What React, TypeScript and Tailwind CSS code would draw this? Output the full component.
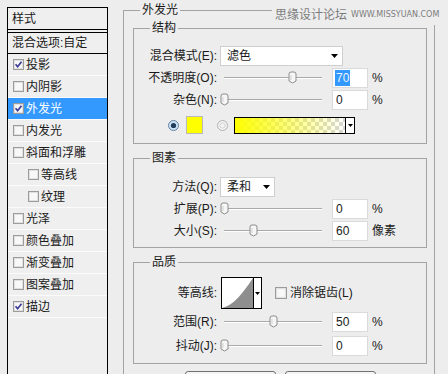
import React from 'react';

const LAYERS = [
  { t: '投影', on: true },
  { t: '内阴影' },
  { t: '外发光', on: true, active: true },
  { t: '内发光' },
  { t: '斜面和浮雕' },
  { t: '等高线', sub: true },
  { t: '纹理', sub: true },
  { t: '光泽' },
  { t: '颜色叠加' },
  { t: '渐变叠加' },
  { t: '图案叠加' },
  { t: '描边', on: true },
];

const Check = ({ on, size = 11 }: { on?: boolean; size?: number }) => (
  <svg width={size} height={size} viewBox="0 0 11 11" className="shrink-0">
    <rect x="0.5" y="0.5" width="10" height="10" fill="#f8f8f8" stroke="#9c9c9c" />
    <rect x="1.5" y="1.5" width="8" height="8" fill="none" stroke="#e0e0e0" />
    {on && <path d="M2.6 5.3 L4.6 7.7 L8.5 2.7" fill="none" stroke="#3a3a96" strokeWidth="1.7" />}
  </svg>
);

const Arrow = () => (
  <svg width="7" height="4" viewBox="0 0 7 4" className="shrink-0">
    <path d="M0 0 H7 L3.5 4 Z" fill="#000" />
  </svg>
);

const Slider = ({ pct }: { pct: number }) => (
  <div className="relative ml-[3px] flex h-full w-[106px] items-center px-[4px]">
    <div className="h-[2px] w-full border-y border-t-[#a9a9a9] border-b-white" />
    <svg
      width="9"
      height="13"
      viewBox="0 0 9 13"
      className="absolute top-[4px]"
      style={{ left: 4 + (98 * pct) / 100 - 4.5 }}
    >
      <path d="M1 3 Q1 1 3 1 H6 Q8 1 8 3 V10 L4.5 12 L1 10 Z" fill="#f6f6f6" stroke="#8c8c8c" />
      <path d="M3 4 V9" stroke="#cfcfcf" />
    </svg>
  </div>
);

const Num = ({ v, sel }: { v: string; sel?: boolean }) => (
  <div className="ml-[6px] flex h-[20px] w-[36px] items-center border border-[#dadada] bg-white pl-[2px]">
    <span className={sel ? 'bg-[#3399ff] px-[1px] text-[#eaf4ff]' : 'px-[1px]'}>{v}</span>
  </div>
);

const Row = ({ label, children }: { label: string; children: React.ReactNode }) => (
  <div className="flex h-[22px] items-center">
    <div className="w-[83px] text-right">{label}</div>
    {children}
  </div>
);

const Group = ({ title, className, children }: { title: string; className: string; children: React.ReactNode }) => (
  <fieldset className={`ml-[9px] w-[294px] border border-[#a3a3a3] ${className}`}>
    <legend className="ml-[16px] px-[2px] leading-[16px]">{title}</legend>
    {children}
  </fieldset>
);

export default function App() {
  return (
    <div className="relative flex h-[374px] w-[448px] items-start overflow-hidden bg-[#ededed] font-['Liberation_Sans','Noto_Sans_CJK_SC',sans-serif] text-[12px] leading-[16px] text-[#1a1a1a]">
      {/* style list */}
      <div className="ml-[7px] mt-[7px] h-[380px] w-[101px] shrink-0 border-x border-t border-black bg-[#efefef]">
        <div className="flex h-[22px] items-center border-b border-black pl-[4px]">样式</div>
        <div className="h-[2px]" />
        <div className="flex h-[22px] items-center border-y border-black pl-[4px]">混合选项:自定</div>
        {LAYERS.map((l) => (
          <div
            key={l.t}
            className={`flex h-[22px] items-center border-b border-[#fbfbfb] ${l.sub ? 'pl-[20px]' : 'pl-[5px]'} ${
              l.active ? 'bg-[#3399ff] text-white' : ''
            }`}
          >
            <Check on={l.on} />
            <span className="ml-[2px]">{l.t}</span>
          </div>
        ))}
      </div>

      {/* outer glow panel */}
      <fieldset className="ml-[15px] mt-[2px] h-[420px] w-[312px] shrink-0 border border-[#a3a3a3]">
        <legend className="ml-[16px] px-[2px] leading-[16px]">外发光</legend>

        <Group title="结构" className="mt-[2px] pb-[7px] pt-[9px]">
          <Row label="混合模式(E):">
            <div className="ml-[3px] flex h-[20px] w-[123px] items-center justify-between border border-[#cfcfcf] bg-white pl-[6px] pr-[4px]">
              <span>滤色</span>
              <Arrow />
            </div>
          </Row>
          <Row label="不透明度(O):">
            <Slider pct={70} />
            <Num v="70" sel />
            <span className="ml-[4px]">%</span>
          </Row>
          <Row label="杂色(N):">
            <Slider pct={0} />
            <Num v="0" />
            <span className="ml-[4px]">%</span>
          </Row>
          <div className="mt-[3px] flex h-[22px] items-center pl-[34px]">
            <svg width="11" height="11" viewBox="0 0 11 11" className="shrink-0">
              <circle cx="5.5" cy="5.5" r="5" fill="#cfe0f0" stroke="#5f84aa" />
              <circle cx="5.5" cy="5.5" r="2.6" fill="#1f3c5c" />
            </svg>
            <div className="ml-[7px] h-[18px] w-[17px] border border-[#b9b9b9] bg-[#ffff00]" />
            <svg width="11" height="11" viewBox="0 0 11 11" className="ml-[14px] shrink-0">
              <circle cx="5.5" cy="5.5" r="5" fill="#f3f3f3" stroke="#b0b0b0" />
              <circle cx="5.5" cy="5.5" r="2.6" fill="none" stroke="#d4d4d4" />
            </svg>
            <div className="ml-[6px] flex h-[17px] w-[121px] border border-black">
              <div className="flex-1 bg-[repeating-conic-gradient(#d6d6d6_0_25%,#ffffff_0_50%)] bg-[length:8px_8px]">
                <div className="h-full w-full bg-[linear-gradient(to_right,#ffff00,rgba(255,255,0,0.55)_45%,rgba(255,255,0,0))]" />
              </div>
              <div className="flex w-[9px] items-center justify-center border-l border-black bg-white">
                <svg width="5" height="3" viewBox="0 0 5 3">
                  <path d="M0 0 H5 L2.5 3 Z" fill="#000" />
                </svg>
              </div>
            </div>
          </div>
        </Group>

        <Group title="图素" className="mt-[6px] pb-[5px] pt-[10px]">
          <Row label="方法(Q):">
            <div className="ml-[3px] flex h-[20px] w-[55px] items-center justify-between border border-[#cfcfcf] bg-white pl-[6px] pr-[4px]">
              <span>柔和</span>
              <Arrow />
            </div>
          </Row>
          <Row label="扩展(P):">
            <Slider pct={0} />
            <Num v="0" />
            <span className="ml-[4px]">%</span>
          </Row>
          <Row label="大小(S):">
            <Slider pct={30} />
            <Num v="60" />
            <span className="ml-[4px]">像素</span>
          </Row>
        </Group>

        <Group title="品质" className="mt-[6px] pb-[6px] pt-[6px]">
          <div className="flex h-[34px] items-center">
            <div className="w-[83px] text-right">等高线:</div>
            <div className="ml-[4px] flex h-[32px] border border-black">
              <svg width="31" height="30" viewBox="0 0 31 30" className="bg-white">
                <path d="M0 30 C 12 27, 21 15, 31 0 L31 30 Z" fill="#8e8e8e" />
              </svg>
              <div className="flex w-[8px] items-center justify-center border-l border-black bg-white">
                <svg width="5" height="3" viewBox="0 0 5 3">
                  <path d="M0 0 H5 L2.5 3 Z" fill="#000" />
                </svg>
              </div>
            </div>
            <div className="ml-[13px]">
              <Check size={12} />
            </div>
            <span className="ml-[3px]">消除锯齿(L)</span>
          </div>
          <div className="mt-[1px]">
            <Row label="范围(R):">
              <Slider pct={50} />
              <Num v="50" />
              <span className="ml-[4px]">%</span>
            </Row>
          </div>
          <div className="mt-[2px]">
            <Row label="抖动(J):">
              <Slider pct={0} />
              <Num v="0" />
              <span className="ml-[4px]">%</span>
            </Row>
          </div>
        </Group>

        <div className="ml-[61px] mt-[7px] flex gap-[9px]">
          <div className="h-[22px] w-[91px] rounded-[3px] border border-[#707070] bg-[linear-gradient(#f6f6f6,#dddddd)]" />
          <div className="h-[22px] w-[91px] rounded-[3px] border border-[#707070] bg-[linear-gradient(#f6f6f6,#dddddd)]" />
        </div>
      </fieldset>

      {/* forum watermark over the frame */}
      <div className="absolute left-[272px] right-0 top-[5px] flex h-[20px] items-center whitespace-nowrap bg-[#ededed] pl-[3px] text-[#7c7c7c]">
        <span>思缘设计论坛</span>
        <span className="ml-[4px] font-['DejaVu_Sans',sans-serif] text-[8px] leading-[14px]">WWW.MISSYUAN.COM</span>
      </div>
    </div>
  );
}
